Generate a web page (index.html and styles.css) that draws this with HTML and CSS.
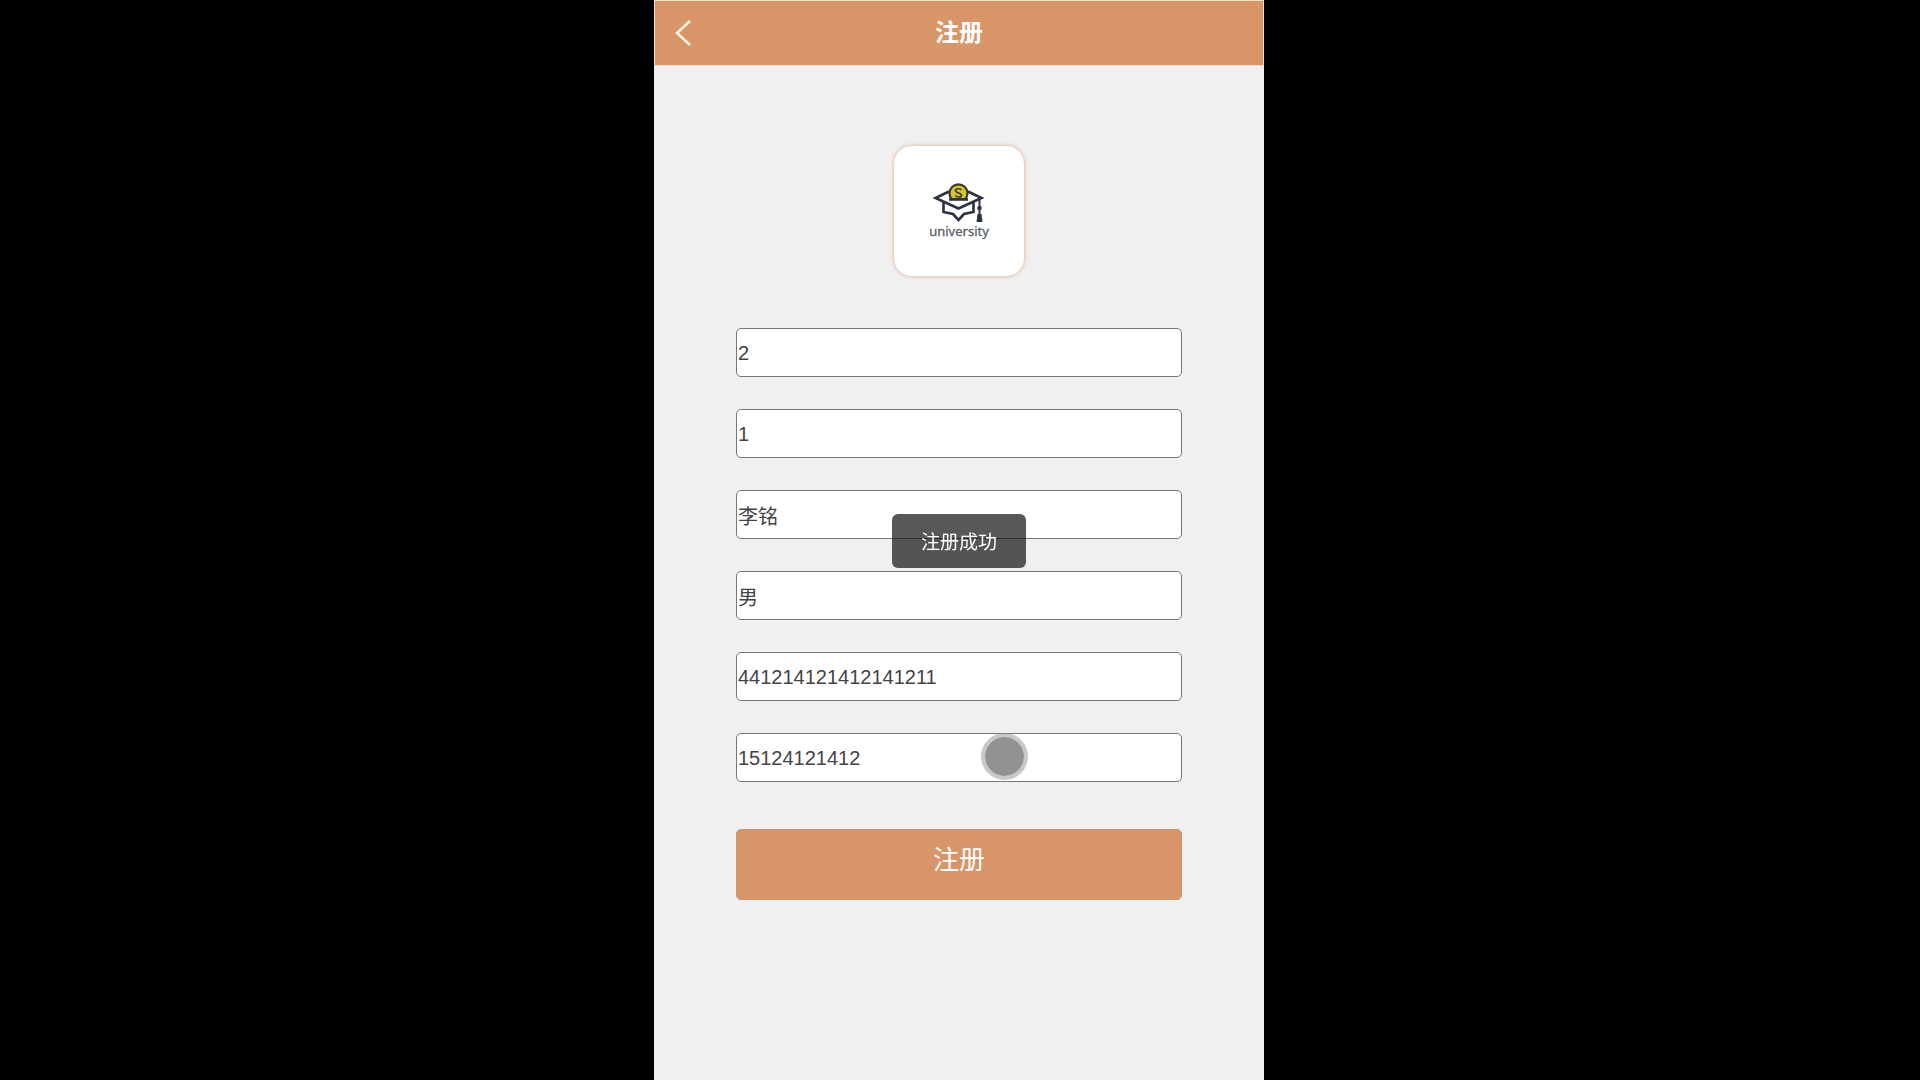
FILE: index.html
```html
<!DOCTYPE html>
<html lang="zh-CN">
<head>
    <meta charset="UTF-8">
    <meta name="viewport" content="width=device-width, initial-scale=1.0">
    <title>注册</title>
    <link rel="stylesheet" href="styles.css">
</head>
<body>
    <div class="page">
        <header class="navbar">
            <a class="back" href="#" aria-label="返回">
                <svg width="16" height="26" viewBox="0 0 16 26">
                    <path d="M15 1L2 13L15 25" fill="none" stroke="#fff3e4" stroke-width="2.6"/>
                </svg>
            </a>
            <h1 class="title">注册</h1>
        </header>

        <main class="content">
            <div class="logo">
                <svg width="130" height="130" viewBox="0 0 130 130" role="img" aria-label="university">
                    <!-- cap -->
                    <g fill="none" stroke="#2b3242" stroke-width="2.6">
                        <path d="M49.500 56V66L59 68L64.500 74L70 68L79.500 66V56"/>
                        <path d="M55 45.500L41.500 52L64.500 62.500L87.500 52L74 45.500" fill="#fff"/>
                    </g>
                    <!-- coin -->
                    <path d="M57.500 53A9 9 0 1 1 71.500 53Z" fill="#d6c42a" stroke="#34382f" stroke-width="2.2"/>
                    <path d="M55 53.500H74" stroke="#2b3242" stroke-width="2.600"/>
                    <path d="M67.500 44C66 42.200 61.500 42.200 61.500 44.600C61.500 47.400 67.500 46.400 67.500 49.200C67.500 51.600 63 51.600 61.300 49.600" fill="none" stroke="#34382f" stroke-width="1.600"/>
                    <!-- tassel -->
                    <path d="M85.500 53V69" stroke="#2b3242" stroke-width="2"/>
                    <circle cx="85.500" cy="62" r="2.300" fill="#2b3242"/>
                    <path d="M83.500 68H87.500L88.500 76H82.500Z" fill="#2b3242"/>
                    <text class="logo-text" x="65" y="90" text-anchor="middle">university</text>
                </svg>
            </div>

            <form class="form">
                <input class="field" type="text" name="username" aria-label="账号" value="2">
                <input class="field" type="text" name="password" aria-label="密码" value="1">
                <input class="field" type="text" name="realname" aria-label="姓名" value="李铭">
                <input class="field" type="text" name="gender" aria-label="性别" value="男">
                <input class="field" type="text" name="idcard" aria-label="身份证" value="441214121412141211">
                <div class="field-wrap">
                    <input class="field" type="text" name="phone" aria-label="手机" value="15124121412">
                    <span class="touch"></span>
                </div>
                <button class="submit" type="button">注册</button>
            </form>
        </main>
    </div>

    <div class="toast" role="status">注册成功</div>
</body>
</html>
```

FILE: styles.css
```css
* {
    box-sizing: border-box;
}

body {
    margin: 0;
    padding-right: 2px;
    background-color: #000;
    font-family: "Liberation Sans", "Noto Sans CJK SC", sans-serif;
}

.page {
    max-width: 610px;
    min-height: 100vh;
    margin: 0 auto;
    background-color: #f0f0f0;
}

.navbar {
    display: grid;
    grid-template-columns: 60px 1fr 60px;
    align-items: center;
    height: 66px;
    background-color: #d89567;
    border: 1px solid #f6dccb;
}

.back {
    display: flex;
    padding-left: 20px;
}

.title {
    grid-column: 2;
    margin: 0;
    color: #fff;
    font-size: 24px;
    line-height: 36px;
    text-align: center;
}

.content {
    padding: 80px 82px;
}

.logo {
    width: 130px;
    height: 130px;
    margin: 0 auto 52px;
    background-color: #fff;
    border-radius: 18px;
    box-shadow: 0 0 4px #e0a584;
}

.logo svg {
    display: block;
}

.logo-text {
    fill: #5b5f68;
    stroke: #5b5f68;
    stroke-width: 0.3px;
    font-family: "Noto Sans", sans-serif;
    font-size: 13px;
}

.form {
    display: flex;
    flex-direction: column;
    gap: 32px;
}

.field {
    display: block;
    width: 100%;
    height: 49px;
    padding: 1px 1px 0;
    color: #444;
    background-color: #fff;
    border: 1px solid #767676;
    border-radius: 5px;
    font-family: inherit;
    font-size: 20px;
}

.field-wrap {
    position: relative;
}

/* touch point */
.touch {
    position: absolute;
    top: 0;
    left: 55%;
    width: 47px;
    height: 47px;
    background-color: #929292;
    background-clip: padding-box;
    border: 4px solid rgba(146, 146, 146, 0.5);
    border-radius: 50%;
}

.submit {
    height: 71px;
    margin-top: 15px;
    padding: 0 0 14px;
    color: #fff;
    background-color: #d89567;
    border: 1px solid #cc936c;
    border-radius: 5px;
    font-family: inherit;
    font-size: 26px;
    cursor: pointer;
}

.toast {
    position: fixed;
    top: 50%;
    left: 50%;
    transform: translate(-50%, -50%);
    margin: 1px 0 0 -1px;
    padding: 14px 29px 10px;
    color: #fff;
    background-color: rgba(17, 17, 17, 0.7);
    border-radius: 6px;
    font-size: 19px;
    line-height: 30px;
    white-space: nowrap;
}
```
